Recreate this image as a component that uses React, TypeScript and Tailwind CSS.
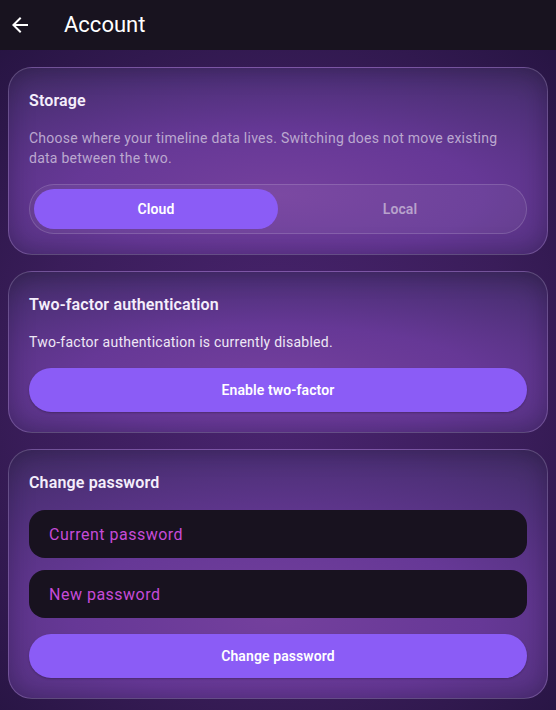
import React from "react";

function BackArrow() {
  return (
    <svg width="24" height="24" viewBox="0 0 24 24" fill="#ffffff" aria-hidden="true">
      <path d="M20 11H7.83l5.59-5.59L12 4l-8 8 8 8 1.41-1.41L7.83 13H20v-2z" />
    </svg>
  );
}

function Card({ title, children }: { title: string; children: React.ReactNode }) {
  return (
    <section className="rounded-[24px] border border-white/15 p-5 flex flex-col gap-4 bg-[radial-gradient(ellipse_95%_85%_at_50%_68%,#74409d_0%,#663896_40%,#4e3078_75%,#3c2a5c_100%)] shadow-[inset_0_0_24px_rgba(20,10,40,0.35)]">
      <h2 className="text-[16px] leading-6 pt-px -mb-px font-semibold tracking-[0.15px] text-[#f4eefb]">{title}</h2>
      {children}
    </section>
  );
}

export default function App() {
  return (
    <div
      className="w-[556px] h-[710px] overflow-hidden flex flex-col bg-[radial-gradient(ellipse_80%_70%_at_50%_55%,#4a2470_0%,#3a1d5a_55%,#24133f_100%)]"
      style={{ fontFamily: "Roboto, 'Noto Sans', sans-serif" }}
    >
      <header className="h-[50px] shrink-0 bg-[#18131f] flex items-center pl-2">
        <button className="w-6 h-6 flex items-center justify-center">
          <BackArrow />
        </button>
        <h1 className="ml-8 text-[22px] leading-7 text-white font-normal">Account</h1>
      </header>

      <main className="flex flex-col gap-4 px-2 pt-[17px]">
        <Card title="Storage">
          <p className="text-[14px] leading-5 tracking-[0.25px] text-[#bba8cf]">
            Choose where your timeline data lives. Switching does not move existing data between the two.
          </p>
          <div className="rounded-full border border-white/15 bg-white/5 p-1 flex">
            <button className="flex-1 h-10 rounded-full bg-[#8b5cf6] text-white text-[14px] font-semibold tracking-[0.1px]">
              Cloud
            </button>
            <button className="flex-1 h-10 rounded-full text-[#b8a2cc] text-[14px] font-semibold tracking-[0.1px]">
              Local
            </button>
          </div>
        </Card>

        <Card title="Two-factor authentication">
          <p className="text-[14px] leading-5 tracking-[0.25px] text-[#eee7f5]">
            Two-factor authentication is currently disabled.
          </p>
          <button className="h-11 rounded-full bg-[#8b5cf6] text-white text-[14px] font-semibold tracking-[0.1px] shadow-[0_1px_2px_rgba(0,0,0,0.25)]">
            Enable two-factor
          </button>
        </Card>

        <Card title="Change password">
          <div className="flex flex-col gap-3">
            <input
              type="password"
              placeholder="Current password"
              className="h-12 rounded-2xl bg-[#18121f] px-5 text-[16px] tracking-[0.5px] text-white outline-none placeholder:text-[#c64bd8]"
            />
            <input
              type="password"
              placeholder="New password"
              className="h-12 rounded-2xl bg-[#18121f] px-5 text-[16px] tracking-[0.5px] text-white outline-none placeholder:text-[#c64bd8]"
            />
          </div>
          <button className="h-11 rounded-full bg-[#8b5cf6] text-white text-[14px] font-semibold tracking-[0.1px] shadow-[0_1px_2px_rgba(0,0,0,0.25)]">
            Change password
          </button>
        </Card>
      </main>
    </div>
  );
}
